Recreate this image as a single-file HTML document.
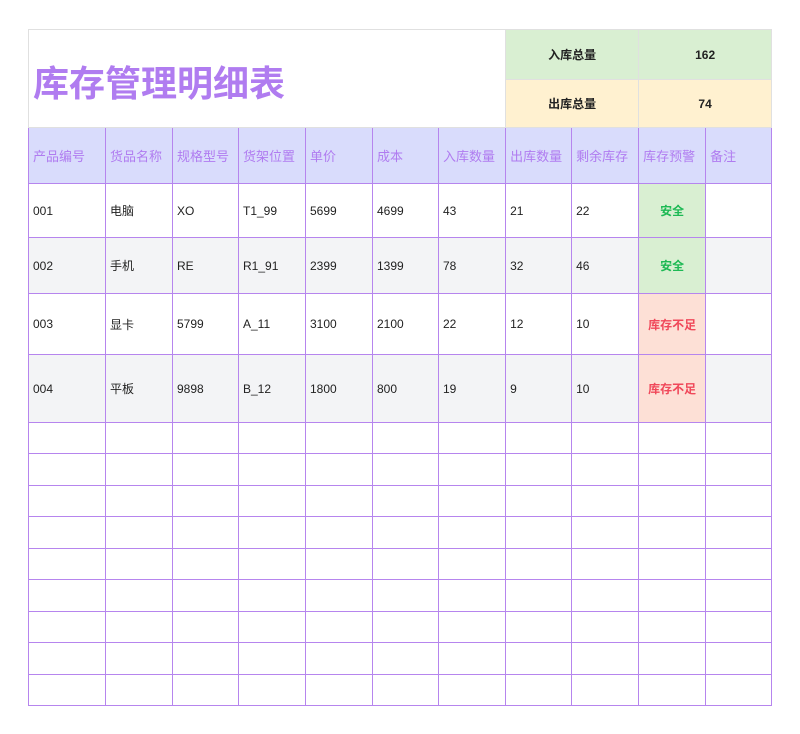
<!DOCTYPE html>
<html><head><meta charset="utf-8"><style>
body{margin:0;background:#fff;font-family:"Liberation Sans","Noto Sans CJK SC",sans-serif;}
table{position:absolute;left:28px;top:29px;border-collapse:collapse;table-layout:fixed;width:743px;}
td{border:1px solid #b685ee;padding:0 0 0 4px;font-size:12px;color:#222;overflow:hidden;white-space:nowrap;}
.t td{border-color:#e0e0e0;}
.title{font-size:36px;color:#b07cf0;font-weight:bold;padding-left:4px;padding-top:4px;}
.c{text-align:center;padding:0;font-weight:bold;font-size:12px;}
.g{background:#d9efd2;}
.y{background:#fff1d0;}
.h td{background:#d9dcfc;color:#b07cf0;font-size:13px;}
.alt td{background:#f3f4f6;}
.ok{background:#d9efd2!important;color:#1db954;text-align:center;font-weight:bold;padding:0;}
.bad{background:#fde0d6!important;color:#f0485a;text-align:center;font-weight:bold;padding:0;}
</style></head><body>
<table>
<colgroup><col style="width:77px"><col style="width:67px"><col style="width:66px"><col style="width:67px"><col style="width:67px"><col style="width:66px"><col style="width:67px"><col style="width:66px"><col style="width:67px"><col style="width:67px"><col style="width:66px"></colgroup>
<tr class="t" style="height:50px"><td colspan="7" rowspan="2" class="title">库存管理明细表</td><td colspan="2" class="c g">入库总量</td><td colspan="2" class="c g">162</td></tr>
<tr class="t" style="height:48px"><td colspan="2" class="c y">出库总量</td><td colspan="2" class="c y">74</td></tr>
<tr class="h" style="height:56px"><td>产品编号</td><td>货品名称</td><td>规格型号</td><td>货架位置</td><td>单价</td><td>成本</td><td>入库数量</td><td>出库数量</td><td>剩余库存</td><td>库存预警</td><td>备注</td></tr>
<tr style="height:54px"><td>001</td><td>电脑</td><td>XO</td><td>T1_99</td><td>5699</td><td>4699</td><td>43</td><td>21</td><td>22</td><td class="ok">安全</td><td></td></tr>
<tr class="alt" style="height:56px"><td>002</td><td>手机</td><td>RE</td><td>R1_91</td><td>2399</td><td>1399</td><td>78</td><td>32</td><td>46</td><td class="ok">安全</td><td></td></tr>
<tr style="height:61px"><td>003</td><td>显卡</td><td>5799</td><td>A_11</td><td>3100</td><td>2100</td><td>22</td><td>12</td><td>10</td><td class="bad">库存不足</td><td></td></tr>
<tr class="alt" style="height:68px"><td>004</td><td>平板</td><td>9898</td><td>B_12</td><td>1800</td><td>800</td><td>19</td><td>9</td><td>10</td><td class="bad">库存不足</td><td></td></tr>
<tr style="height:31px"><td></td><td></td><td></td><td></td><td></td><td></td><td></td><td></td><td></td><td></td><td></td></tr>
<tr style="height:32px"><td></td><td></td><td></td><td></td><td></td><td></td><td></td><td></td><td></td><td></td><td></td></tr>
<tr style="height:31px"><td></td><td></td><td></td><td></td><td></td><td></td><td></td><td></td><td></td><td></td><td></td></tr>
<tr style="height:32px"><td></td><td></td><td></td><td></td><td></td><td></td><td></td><td></td><td></td><td></td><td></td></tr>
<tr style="height:31px"><td></td><td></td><td></td><td></td><td></td><td></td><td></td><td></td><td></td><td></td><td></td></tr>
<tr style="height:32px"><td></td><td></td><td></td><td></td><td></td><td></td><td></td><td></td><td></td><td></td><td></td></tr>
<tr style="height:31px"><td></td><td></td><td></td><td></td><td></td><td></td><td></td><td></td><td></td><td></td><td></td></tr>
<tr style="height:32px"><td></td><td></td><td></td><td></td><td></td><td></td><td></td><td></td><td></td><td></td><td></td></tr>
<tr style="height:31px"><td></td><td></td><td></td><td></td><td></td><td></td><td></td><td></td><td></td><td></td><td></td></tr>
</table>
</body></html>
